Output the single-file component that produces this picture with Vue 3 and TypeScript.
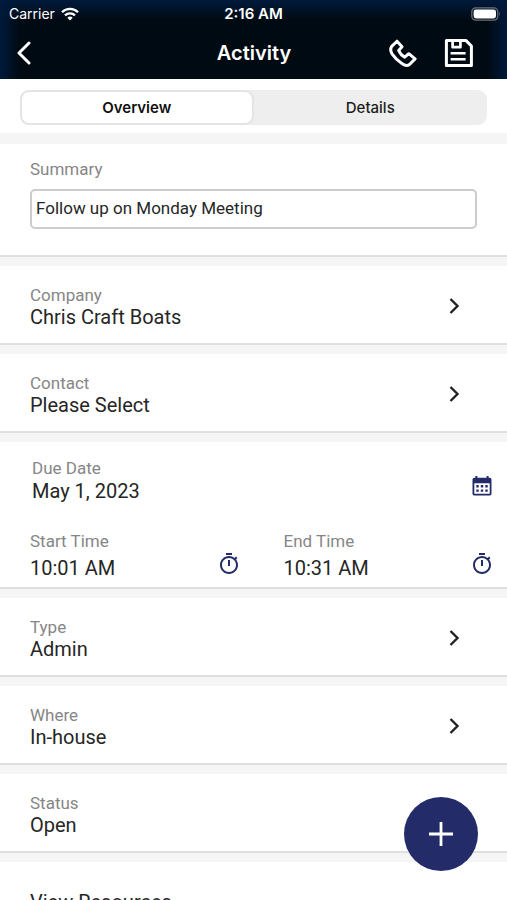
<script setup lang="ts">
import { ref } from 'vue'

type Tab = 'Overview' | 'Details'

interface Field {
  label: string
  value: string
}

const tabs: Tab[] = ['Overview', 'Details']
const activeTab = ref<Tab>('Overview')
const summary = ref('Follow up on Monday Meeting')

const parties: Field[] = [
  { label: 'Company', value: 'Chris Craft Boats' },
  { label: 'Contact', value: 'Please Select' },
]
const times: Field[] = [
  { label: 'Start Time', value: '10:01 AM' },
  { label: 'End Time', value: '10:31 AM' },
]
const attributes: Field[] = [
  { label: 'Type', value: 'Admin' },
  { label: 'Where', value: 'In-house' },
]
</script>

<template>
  <div class="screen">
    <header class="header">
      <div class="status-bar">
        <div class="carrier">
          <span>Carrier</span>
          <svg width="18" height="14" viewBox="0 0 18 14" fill="none" stroke="#fff" stroke-width="2.3">
            <path d="M1 5.2a11.4 11.4 0 0 1 16 0" />
            <path d="M4 8.4a7.2 7.2 0 0 1 10 0" />
            <path d="M6.3 10.7a3.9 3.9 0 0 1 5.4 0L9 13.6z" fill="#fff" stroke="none" />
          </svg>
        </div>
        <span class="clock">2:16 AM</span>
        <svg class="battery" width="30" height="14" viewBox="0 0 30 14">
          <rect x=".8" y=".8" width="26" height="12.4" rx="4" fill="none" stroke="#6b7178" stroke-width="1.2" />
          <rect x="2.6" y="2.6" width="22.4" height="8.8" rx="2.4" fill="#fff" />
          <path d="M28.2 4.8q1.6 2.2 0 4.4z" fill="#6b7178" />
        </svg>
      </div>
      <div class="nav-bar">
        <button class="icon-button back" type="button" aria-label="Back">
          <svg width="16" height="24" viewBox="0 0 16 24" fill="none" stroke="#fff" stroke-width="3" stroke-linecap="round" stroke-linejoin="round">
            <path d="M13 2 3 12l10 10" />
          </svg>
        </button>
        <h1 class="title">Activity</h1>
        <div class="actions">
          <button class="icon-button" type="button" aria-label="Call">
            <svg width="30" height="30" viewBox="0 0 30 30" fill="none" stroke="#fff" stroke-width="3" stroke-linejoin="round">
              <path d="M9 3.200 14 8.800l-3.300 3.800q1.900 4.400 6 6.600l4.100-3.500 6.300 5.200-5.600 5.600q-3.100 2.100-7.300-.7-6.200-4.200-10.200-10-2.400-4-.3-7.400z" />
            </svg>
          </button>
          <button class="icon-button" type="button" aria-label="Save">
            <svg width="30" height="30" viewBox="0 0 30 30" fill="none" stroke="#fff" stroke-width="3" stroke-linejoin="round">
              <path d="M2.400 2.400h19.400l5.600 5.600v19.400h-25z" />
              <path d="M8.600 2.400v6.800h7.800V2.400" stroke-width="2.700" />
              <path d="M6.600 15.300h15M6.600 21.200h15" stroke-width="2.500" />
            </svg>
          </button>
        </div>
      </div>
    </header>

    <nav class="tabs">
      <div class="segmented" role="tablist">
        <button
          v-for="tab in tabs"
          :key="tab"
          class="segment"
          :class="{ active: tab === activeTab }"
          type="button"
          role="tab"
          :aria-selected="tab === activeTab"
          @click="activeTab = tab"
        >
          {{ tab }}
        </button>
      </div>
    </nav>

    <main class="form">
      <section class="card summary">
        <label class="label" for="summary">Summary</label>
        <input id="summary" v-model="summary" class="text-box" type="text" />
      </section>

      <button v-for="field in parties" :key="field.label" class="card row" type="button">
        <span class="field">
          <span class="label">{{ field.label }}</span>
          <span class="value">{{ field.value }}</span>
        </span>
        <svg class="chevron" width="12" height="18" viewBox="0 0 12 18"><path d="m2.500 2 7 7-7 7" /></svg>
      </button>

      <section class="card schedule">
        <button class="picker date" type="button">
          <span class="field">
            <span class="label">Due Date</span>
            <span class="value">May 1, 2023</span>
          </span>
          <svg class="picker-icon" width="24" height="24" viewBox="0 0 24 24">
            <path fill-rule="evenodd" d="M5.400 2h2v1.800h9.200V2h2v1.800h1.200q1.700 0 1.700 1.700v14.300q0 1.700-1.700 1.700H4.200q-1.700 0-1.700-1.700V5.500q0-1.700 1.700-1.700h1.200zM4.300 9.200v10.500h15.400V9.200z" />
            <path d="M6.300 11h2.400v2.400H6.300zm4.500 0h2.400v2.400h-2.400zm4.500 0h2.400v2.400h-2.400zm-9 4.400h2.400v2.400H6.300zm4.500 0h2.400v2.400h-2.400zm4.500 0h2.400v2.400h-2.400z" />
          </svg>
        </button>
        <div class="times">
          <button v-for="time in times" :key="time.label" class="picker time" type="button">
            <span class="field">
              <span class="label">{{ time.label }}</span>
              <span class="value">{{ time.value }}</span>
            </span>
            <svg class="picker-icon" width="24" height="24" viewBox="0 0 24 24">
              <path d="M15 1H9v2h6V1zm-4 13h2V8h-2v6zm8.030-6.610 1.420-1.420c-.43-.51-.9-.99-1.410-1.410l-1.420 1.420C16.070 4.740 14.120 4 12 4c-4.970 0-9 4.030-9 9s4.020 9 9 9 9-4.030 9-9c0-2.120-.74-4.070-1.970-5.610zM12 20c-3.870 0-7-3.130-7-7s3.130-7 7-7 7 3.130 7 7-3.130 7-7 7z" />
            </svg>
          </button>
        </div>
      </section>

      <button v-for="field in attributes" :key="field.label" class="card row" type="button">
        <span class="field">
          <span class="label">{{ field.label }}</span>
          <span class="value">{{ field.value }}</span>
        </span>
        <svg class="chevron" width="12" height="18" viewBox="0 0 12 18"><path d="m2.500 2 7 7-7 7" /></svg>
      </button>

      <button class="card row" type="button">
        <span class="field">
          <span class="label">Status</span>
          <span class="value">Open</span>
        </span>
      </button>

      <button class="card row" type="button">
        <span class="value">View Resources</span>
      </button>
    </main>

    <button class="add" type="button" aria-label="Add">
      <svg width="24" height="24" viewBox="0 0 24 24" stroke="#fff" stroke-width="2.800"><path d="M12 0v24M0 12h24" /></svg>
    </button>
  </div>
</template>

<style>
body {
  margin: 0;
}
</style>

<style scoped>
.screen {
  display: flex;
  flex-direction: column;
  height: 100vh;
  overflow: hidden;
  background: #f5f5f5;
  color: #262626;
  font-family: Roboto, "Liberation Sans", sans-serif;
}

button {
  margin: 0;
  padding: 0;
  border: 0;
  background: none;
  color: inherit;
  font: inherit;
  text-align: left;
  cursor: pointer;
}

svg {
  display: block;
  flex: none;
}

.header {
  flex: none;
  background:
    linear-gradient(90deg, #001a3c 0, transparent 20px),
    linear-gradient(270deg, #001a3c 0, transparent 20px),
    linear-gradient(180deg, #001a3c 0, transparent 20px),
    #000a12;
  color: #fff;
  font-family: Inter, "Liberation Sans", sans-serif;
}

.status-bar,
.nav-bar {
  display: grid;
  grid-template-columns: 1fr auto 1fr;
  align-items: center;
}

.status-bar {
  height: 27px;
  padding: 0 6px;
  font-size: 14px;
}

.carrier {
  display: flex;
  align-items: center;
  gap: 6px;
  padding-left: 3px;
}

.clock {
  font-size: 15px;
  font-weight: 600;
}

.battery {
  justify-self: end;
}

.nav-bar {
  height: 52px;
  padding: 0 33px 0 16px;
}

.back {
  justify-self: start;
}

.title {
  margin: 0;
  padding-left: 18px;
  font-size: 20px;
  font-weight: 600;
}

.actions {
  display: flex;
  justify-content: flex-end;
  gap: 26px;
}

.tabs {
  flex: none;
  padding: 11px 20px 8px;
  background: #fff;
}

.segmented {
  display: flex;
  height: 35px;
  border-radius: 9px;
  background: #eee;
}

.segment {
  flex: 1;
  border: 2px solid transparent;
  border-radius: 9px;
  color: #1c1c1c;
  font: 500 15px Inter, "Liberation Sans", sans-serif;
  text-align: center;
}

.segment.active {
  border-color: #e4e4e4;
  background: #fff;
  color: #111;
  font-weight: 600;
}

.form {
  display: flex;
  flex: 1;
  flex-direction: column;
  gap: 9px;
  min-height: 0;
  padding-top: 11px;
  overflow-y: auto;
  scrollbar-width: none;
}

.card {
  flex: none;
  box-sizing: border-box;
  border-bottom: 2px solid #dfdfdf;
  background: #fff;
}

.summary {
  display: flex;
  flex-direction: column;
  gap: 10px;
  padding: 15px 30px 26px;
}

.label,
.value {
  display: block;
}

.label {
  color: #868686;
  font-size: 17px;
  line-height: 20px;
}

.value {
  font-size: 20px;
  line-height: 24px;
}

.text-box {
  width: 100%;
  height: 40px;
  box-sizing: border-box;
  padding: 0 4px 2px;
  border: 2px solid #ccc;
  border-radius: 5px;
  background: #fff;
  color: #262626;
  font: 17px Roboto, "Liberation Sans", sans-serif;
}

.row {
  display: flex;
  align-items: center;
  justify-content: space-between;
  min-height: 79px;
  padding: 2px 47px 0 30px;
}

.row .field {
  padding-top: 3px;
}

.chevron {
  fill: none;
  stroke: #222;
  stroke-width: 2.4px;
}

.schedule {
  padding: 16px 0 7px;
}

.picker {
  display: flex;
  align-items: flex-end;
  justify-content: space-between;
  width: 100%;
  padding-right: 13px;
}

.date {
  padding-left: 32px;
}

.date .value {
  padding: 1px 0 2px;
}

.date .picker-icon {
  margin-bottom: 7px;
}

.times {
  display: grid;
  grid-template-columns: 1fr 1fr;
  margin-top: 26px;
}

.time {
  padding-left: 30px;
}

.time .value {
  padding-top: 5px;
}

.time .picker-icon {
  margin-bottom: 4px;
}

.picker-icon {
  fill: #232c68;
}

.add {
  position: fixed;
  right: 29px;
  bottom: 29px;
  display: grid;
  place-items: center;
  width: 74px;
  height: 74px;
  border-radius: 50%;
  background: #232c68;
}
</style>
